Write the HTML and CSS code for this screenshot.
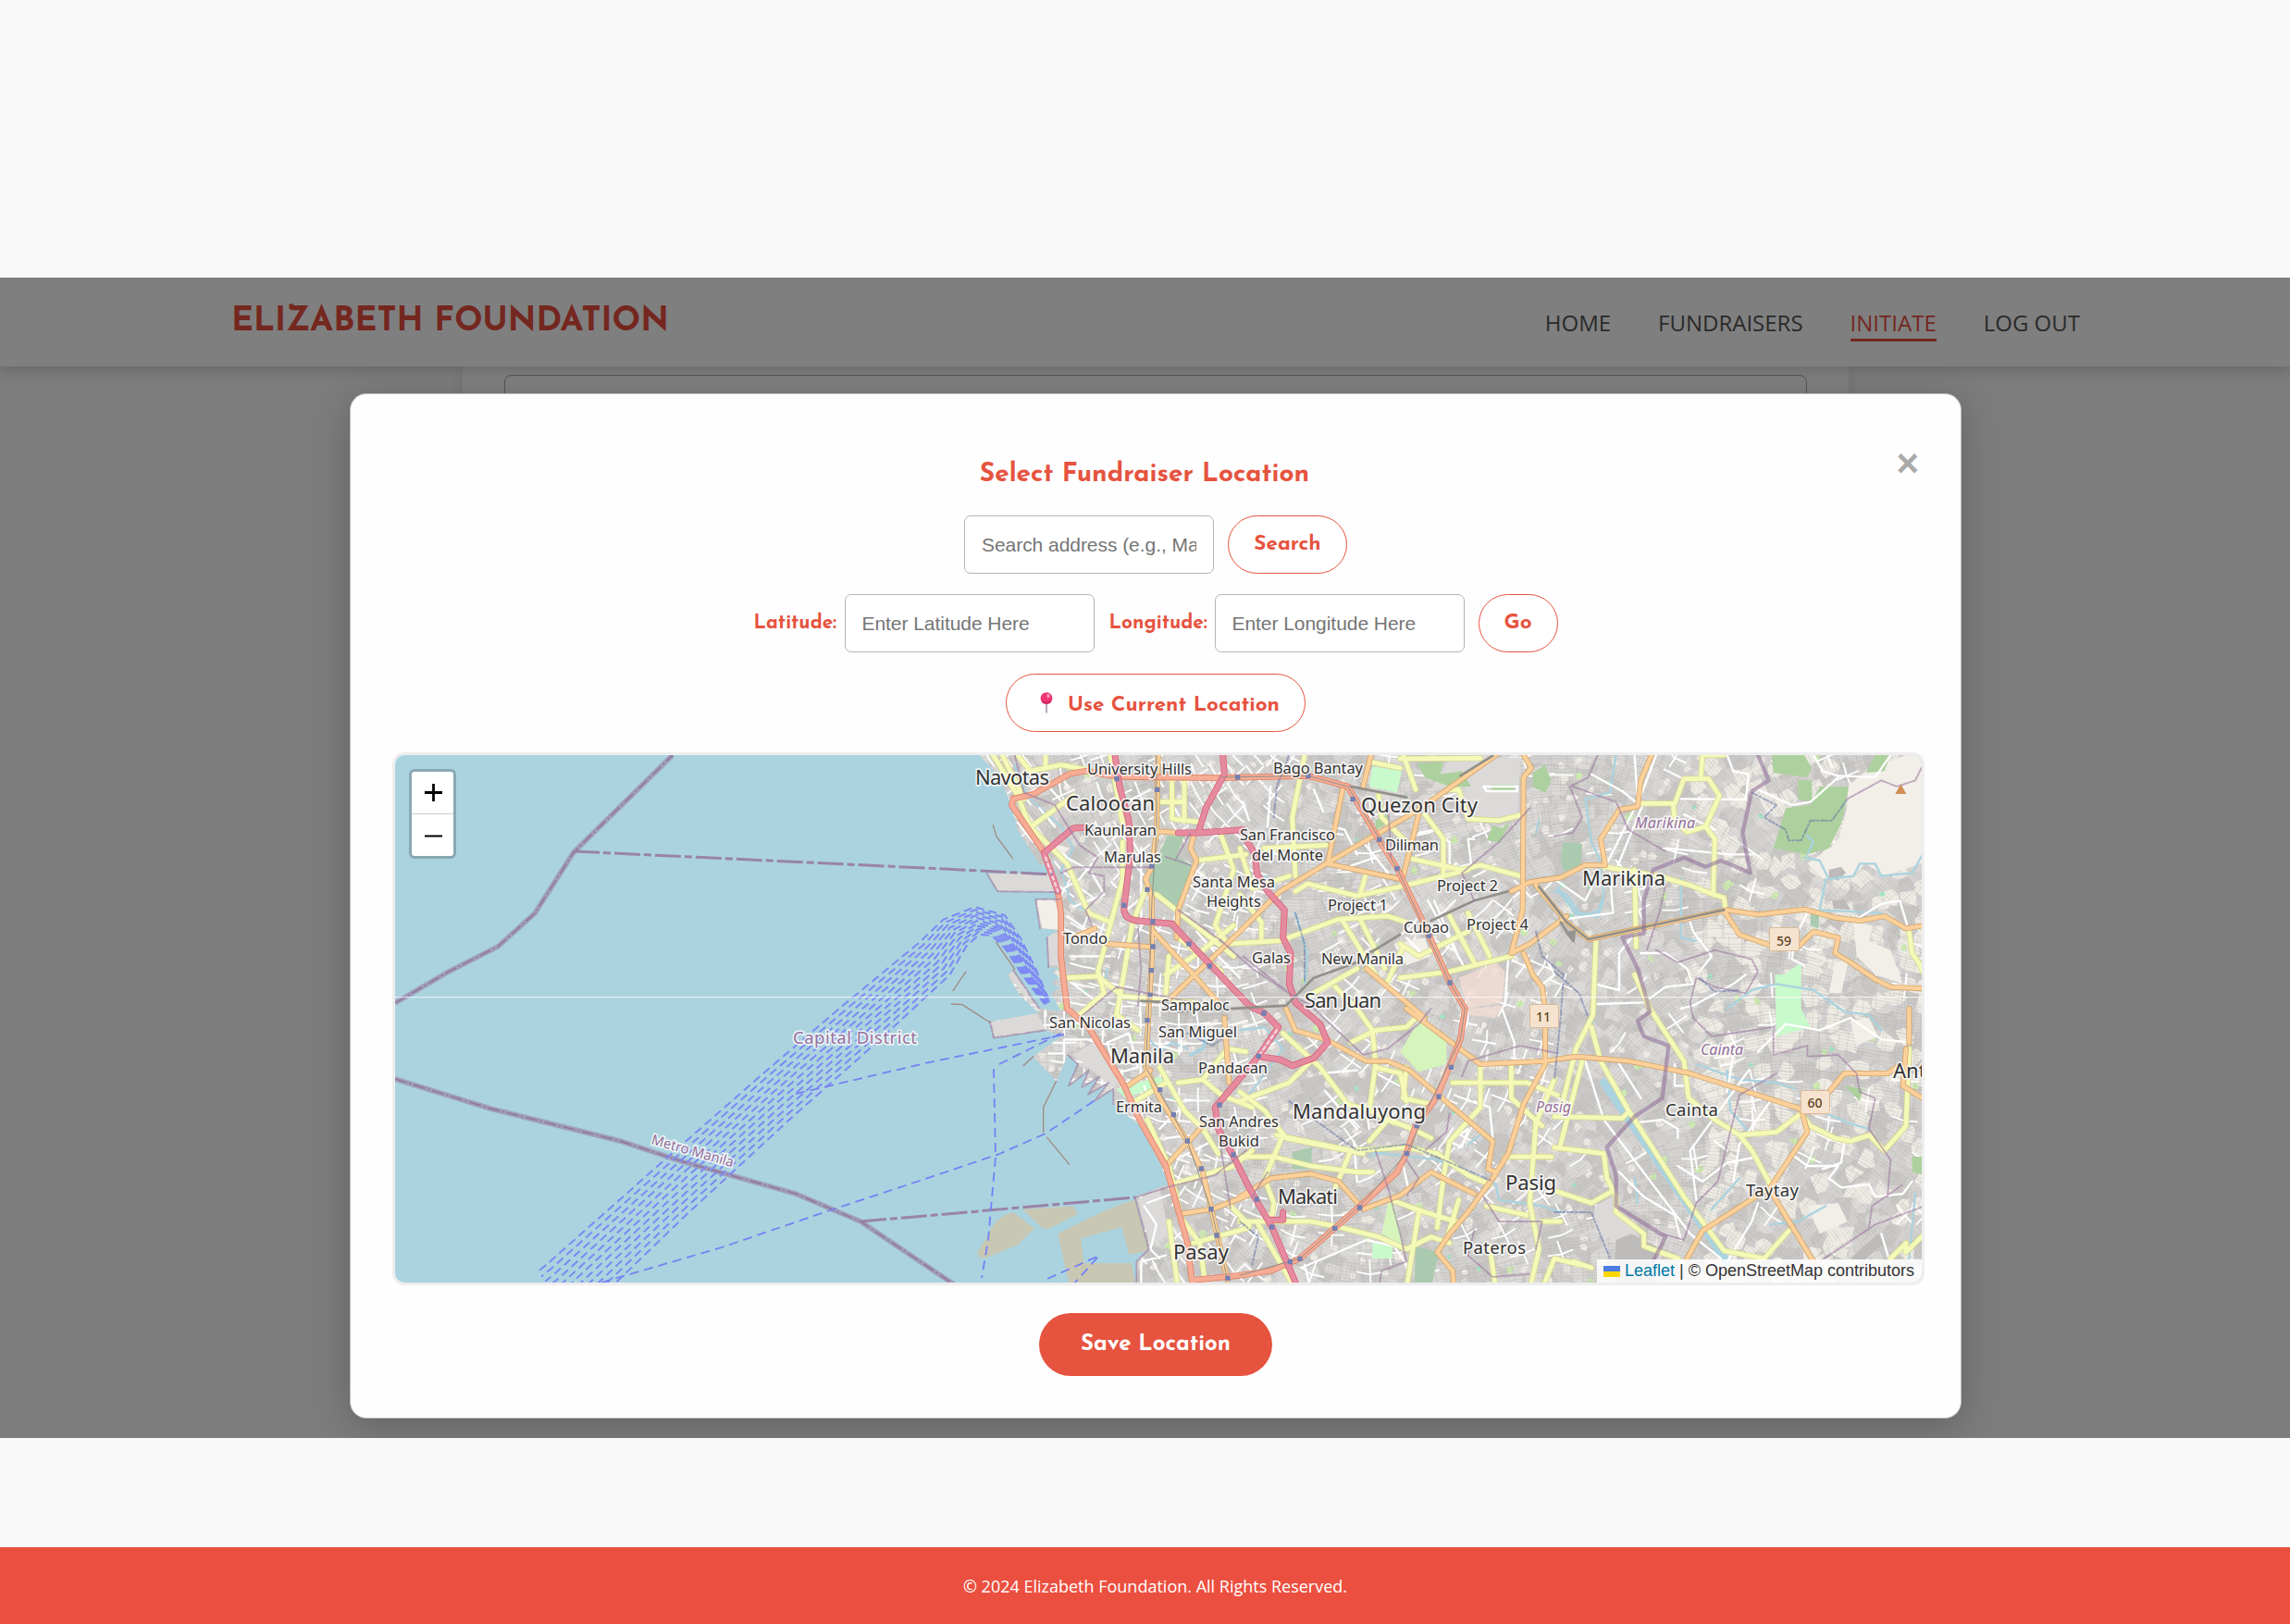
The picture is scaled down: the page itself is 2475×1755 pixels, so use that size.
FILE: index.html
```html
<!DOCTYPE html>
<html lang="en">
<head>
<meta charset="utf-8">
<title>Elizabeth Foundation</title>
<link rel="stylesheet" href="styles.css">
</head>
<body>
<main class="stage">
  <header class="site-header">
    <div class="brand">ELIZABETH FOUNDATION</div>
    <nav class="nav">
      <a class="nav-link home">HOME</a>
      <a class="nav-link fundraisers">FUNDRAISERS</a>
      <a class="nav-link initiate active">INITIATE</a>
      <a class="nav-link logout">LOG OUT</a>
    </nav>
  </header>
  <section class="form-card"><div class="form-field"></div></section>
  <div class="overlay">
    <div class="modal">
      <span class="close">×</span>
      <h2 class="modal-title">Select Fundraiser Location</h2>
      <div class="row">
        <input class="field" placeholder="Search address (e.g., Manila)">
        <button class="pill search"><span>Search</span></button>
      </div>
      <div class="row coords">
        <label class="label lat">Latitude:</label>
        <input class="field" placeholder="Enter Latitude Here">
        <label class="label lng">Longitude:</label>
        <input class="field" placeholder="Enter Longitude Here">
        <button class="pill go"><span>Go</span></button>
      </div>
      <div class="row">
        <button class="pill current">
          <svg class="pin" viewBox="0 0 14 23" width="14" height="23"><path d="M6.2 12h1.7v10.5H6.2z" fill="#a99aae"/><circle cx="7" cy="6.6" r="6.4" fill="#ee3674"/><path d="M1 8a6.4 6.4 0 0 0 12 0 8 8 0 0 1-12 0" fill="#c92260"/><ellipse cx="9" cy="4" rx="1.7" ry="2.1" fill="#ff9dbd"/></svg>
          <span>Use Current Location</span>
        </button>
      </div>
      <div class="map">
        <svg class="map-canvas" viewBox="427 816 1650 570" width="1650" height="570">
          <defs>
            <clipPath id="land-clip"><path id="land" d="M175 48 215 90 260 160 275 200 300 290 370 400 440 430 200 432 235 490 430 492 436 515 358 515 372 610 430 615 395 640 400 735 435 740 412 750 435 770 410 785 435 800 410 820 440 880 370 870 285 745 268 762 310 830 370 885 210 912 222 965 390 940 440 960 350 1025 425 1105 462 1020 495 1050 465 1120 530 1070 508 1125 565 1090 528 1148 595 1110 550 1168 610 1130 610 1180 660 1220 700 1250 760 1370 790 1440 680 1480 725 1650 685 1690 685 1790H3240V48Z"/></clipPath>
            <g id="yellow">
              <path d="M220 48 300 180 340 280 460 400 530 560 600 590M300 48 340 100 440 80 520 95M250 48 320 190M390 48V85M350 275 480 180M640 330V450L600 600 560 750 580 820 500 890M600 48 640 270M720 470 670 600 640 780 620 890 690 940M460 770 560 765 640 830 870 850M800 130V250M840 130V250M760 200H840M800 255 890 265M750 500 1000 700M960 310 1000 420 940 600 980 660 1150 650 1340 580 1500 570 1560 590M880 390 1040 370M780 760 900 680 1000 600M780 820 790 700M820 640 960 750"/>
              <path d="M1230 48 1190 250 1200 440M1440 70 1540 90M1550 48 1590 160M1540 60 1800 58M1620 240 1680 320V430M1470 180 1480 250 1560 330M1580 385 1740 420 1800 405 1930 440M1690 160 1730 160 1760 255 1860 260 1940 240M1100 350 1300 340M1200 490 1240 465 1400 505 1560 470 1760 420M1350 580 1460 760M1410 580 1490 740M1430 430 1410 500M1540 660 1600 700 1760 620M1700 570 1780 720M1760 560 1830 700M1540 770 1700 750 1900 700M1330 800 1400 870 1450 940 1460 1050 1440 1200M1240 830 1400 740M1020 350 1060 480 1180 440M1020 500 1090 590V640M1550 670 1500 780"/>
              <path d="M2320 205 2430 205 2460 125 2540 125 2575 180 2530 280 2470 298 2430 260 2425 205M2515 120 2520 48 2590 48M2530 280 2560 320 2555 500 2480 470 2380 440 2200 410M2555 500 2590 510 2595 550M2300 420 2305 670M2175 640 2165 890 2110 1000 2060 1200M3190 620 3200 690 3220 720 3240 760"/>
              <path d="M2350 870 2460 1040 2475 1160 2560 1230 2640 1280 2760 1270 2840 1210 2870 1250 2950 1290 3000 1300 3060 1280 3110 1330 3180 1250 3190 1000M2160 930 2190 1040 2280 1200 2460 1480 2590 1655 2720 1680 2800 1590M2640 1280 2680 1330 2740 1440M2040 1220 2260 1225 2280 1205M2040 1320 2200 1340 2210 1420 2240 1480 2240 1530 2330 1600 2330 1640 2440 1680M2040 1460 2160 1500 2230 1460M2130 1040 2060 1310M2300 760 2350 870M2100 1690 2160 1710M3130 1680 3180 1630 3180 1660 3240 1600"/>
              <path d="M1160 950 1280 1060 1370 1180 1440 1200 1520 1240M1560 1060 1550 1160 1640 1180M1710 1110 1950 1110 2050 1150M1800 1060V1190L1700 1300 1680 1420 1660 1580M1900 1050V1160L2000 1250M1020 1170 1180 1110 1260 1030M1020 1350 1130 1350 1250 1380 1400 1400 1450 1400M1140 1280 1380 1330 1560 1320 1660 1340 1760 1410 1830 1440M1160 1280 1100 1420 1130 1500 1120 1570M1120 1560 1250 1560 1350 1580 1470 1610 1560 1650 1640 1610 1700 1630M1510 1490 1620 1530 1720 1560M1600 1530 1560 1780M1730 1490 1690 1620M1380 1330 1330 1450M1440 1300 1500 1230 1580 1260 1640 1290M1380 980 1460 940 1560 930 1590 900M1460 1060 1540 1080 1560 1170M1020 1140 1100 1200 1170 1290 1420 1340"/>
              <path d="M720 1230 790 1380 830 1550 890 1630 910 1780M790 1560 820 1780M800 1440 1000 1380 1060 1330M870 1630 1050 1580M820 1110 900 1100 980 1000 1040 1010M760 1060 840 1200 900 1260 950 1340M900 1100 960 1150 1060 1190M680 1170 780 1110M980 1500 1050 1570M1960 1780 1990 1650 1960 1500 1980 1240 2040 1100M1830 1640 1850 1780M2000 1780 2040 1680 2120 1700M1880 1350H2030M1080 1570 1200 1780M1820 1510 1950 1540M2000 1560H2060M1020 1560 1130 1560"/>
            </g>
            <g id="orange">
              <path d="M755 48 750 300 735 410 715 450 735 510V700L725 870 715 1060 760 1160 850 1300 900 1400 930 1530 980 1750M755 295 820 300M870 310 860 350 880 390 820 550 815 640M740 620 870 760 950 850M780 850 1020 620 1150 490 1300 400 1600 225 1850 48M1445 48 1420 150M1355 150 1305 400 1540 450M1550 440 1600 240M1940 48 1965 90 1940 120 1937 550 1900 690M1900 490 1960 460 2060 445 2140 405 2205 405 2190 320 2250 225 2310 215 2320 130 2355 48M1980 470 2080 590 2150 645 2600 550 2700 565 2850 548 2950 575 3030 585 3110 570 3180 610 3240 600"/>
              <path d="M2595 560 2640 630 2740 665 2830 670 2880 620 2960 640 2950 690 3000 720 3080 775 3130 800 3240 805M1900 690 1960 660 2080 570M1940 690 1970 760 2000 800 2010 870V1050L1940 1180 1890 1340 1840 1420 1760 1530 1700 1600 1660 1660 1710 1720 1715 1780M1560 870 1800 1050 2010 1040 2110 1025 2280 1040 2480 1080 2840 1195 2860 1270 2740 1450 2520 1590 2470 1680M2740 1460 2880 1690M1430 740 1500 800 1620 900M1020 1480 1120 1420 1250 1405 1340 1430 1420 1520 1540 1475 1640 1400 1780 1470M1170 870 1200 940 1300 970 1430 1040 1500 1040 1570 1070 1840 1300 1825 1390 1850 1400M2930 1140 2980 1080 3120 1080 3150 1060M3190 980V870M3180 1000 3170 1120 3240 1165M780 1380 900 1250M830 1535 930 1520 1060 1470M490 635 550 610M590 660 735 670M650 1125 730 1070M970 900 985 1110"/>
            </g>
            <g id="salmon"><path d="M520 100 470 108 350 175 285 190 280 210 380 355M430 490 440 560V700L460 870 530 930 560 980 640 1110 700 1240 780 1380 800 1450 850 1630 868 1780M520 100 620 118 960 122 1240 115 1370 150 1470 320 1530 415 1600 560 1633 632 1700 785 1750 870 1735 970 1660 1155 1590 1250 1560 1340 1530 1400 1410 1510 1215 1680 1120 1720 1020 1735 870 1750"/></g>
            <g id="pink"><path d="M615 48 630 150 660 260 665 370 645 540Q640 580 690 585L800 595 860 660 1050 860 1100 885 1145 930 1080 1025 1150 1035 1190 1055 1260 1030 1305 980 1280 920 1200 850 1180 790 1185 690 1160 640 1165 550 1110 490 1075 430 1070 370 1045 330M430 490 385 365 480 285 520 283M965 48 970 110 910 220 885 300 1030 290M820 300 885 300M1080 1025 940 1190 950 1260 1000 1350 1050 1450 1125 1580 1210 1780M1120 1555 1160 1555V1530"/></g>
            <g id="stations" fill="#7480b1"><path d="M613 117h16v16h-16zM744 152h16v16h-16zM1005 112h16v16h-16zM726 400h16v16h-16zM712 476h16v16h-16zM636 527h16v16h-16zM730 580h16v16h-16zM847 652h16v16h-16zM914 724h16v16h-16zM730 661h16v16h-16zM725 738h16v16h-16zM721 818h16v16h-16zM712 900h16v16h-16zM753 1125h16v16h-16zM797 1206h16v16h-16zM842 1291h16v16h-16zM887 1381h16v16h-16zM919 1512h16v16h-16zM937 1597h16v16h-16zM973 1736h16v16h-16zM946 1174h16v16h-16zM991 1336h16v16h-16zM1234 107h16v16h-16zM1378 183h16v16h-16zM1464 314h16v16h-16zM1522 408h16v16h-16zM1625 625h16v16h-16zM1693 778h16v16h-16zM1090 877h16v16h-16zM1073 1016h16v16h-16zM1697 1052h16v16h-16zM1657 1147h16v16h-16zM1585 1242h16v16h-16zM1553 1332h16v16h-16zM1401 1507h16v16h-16zM1320 1574h16v16h-16zM1207 1673h16v16h-16zM1175 1683h16v16h-16zM1116 1570h16v16h-16zM1067 1480h16v16h-16z"/></g>
          </defs>
          <rect x="427" y="816" width="1650" height="570" fill="#aad3df"/>
          <g transform="translate(1000 800) scale(.33333)" fill="none" stroke-linejoin="round" stroke-linecap="round">
            <g fill="#c7c7b4"><path d="M315 1520 480 1510 495 1535 405 1582 380 1582ZM285 1530Q230 1540 200 1610L170 1660Q170 1685 200 1677L300 1635 355 1582ZM430 1600Q600 1510 680 1490L725 1655 660 1668 638 1578 505 1615 515 1695 670 1695 685 1780H470Z"/></g>
            <use href="#land" fill="#d4d2d0"/>
            <g clip-path="url(#land-clip)">
              <g id="blocks"></g>
              <g id="streets"></g>
              <path fill="#f2efe9" d="M280 240 330 230 400 330 470 350 430 380 370 320ZM360 520 410 515 436 540 430 615 380 610ZM2860 400 2960 330 2990 210 2990 150 3050 100 3180 48H3240V395L3110 440 3050 400 2990 450 2910 450ZM2995 710 2970 820 2930 820 2950 720ZM1520 660 1620 640 1640 700 1560 730ZM2860 1510 2960 1500 2990 1560 2900 1600ZM3000 910 3060 900 3090 960 3020 990ZM3010 590 3070 600 3060 650 3130 680 3170 790 3080 760 3020 700Z"/>
              <path fill="#dcdad9" d="M205 434 400 430 430 490 235 488ZM395 625H430V730H400ZM270 760 290 750 360 870 330 840ZM215 915 360 880 390 935 225 960ZM480 1020 560 970 640 1110 600 1120ZM690 1490 760 1450 790 1600 730 1640ZM1700 60 1930 55 1920 250 1780 250 1750 150 1640 160ZM2170 1510 2230 1480 2320 1620 2250 1620 2170 1600Z"/>
              <path fill="#aacbaf" d="M785 310 840 310 815 375 865 405 820 545 790 535 720 470 740 410ZM2070 330 2130 335 2125 410 2070 425 2060 385ZM1190 1335 1255 1320 1250 1390 1190 1390ZM1590 1640 1665 1660 1640 1780H1585ZM2870 560 2900 560 2895 610 2870 600Z"/>
              <path fill="#add19e" d="M2745 48H2850L2875 90 2860 120 2750 105ZM2830 130 2875 130 2875 200 2830 190ZM2900 150 2995 150 2970 270 2950 310 2930 350 2860 370 2750 350 2790 220 2870 210ZM3050 105 3080 48H3130L3110 100ZM1595 75 1680 70 1670 110 1740 100 1770 150 1700 150 1620 120ZM1840 275 1870 285 1895 265 1865 330 1820 325ZM1970 105 2010 80 2030 130 2010 170 1970 150ZM2980 1120 3040 1130 3030 1170ZM3200 1350 3240 1350V1410L3200 1400ZM1460 260 1500 240 1500 270 1460 290ZM1835 145H1910V162H1835Z"/>
              <path fill="#c8facc" d="M2840 720V870L2870 930 2760 960 2755 760 2785 760ZM1450 85 1545 100 1530 170 1440 150ZM620 1130 760 1090 780 1110 650 1160ZM1450 1630H1515V1680H1450Z"/>
              <path fill="#d6f5bd" d="M1600 910 1690 970 1690 1050 1600 1075 1540 1010ZM1500 1500 1520 1500 1550 1640 1480 1600Z"/>
              <path fill="#f3dcd2" fill-opacity=".8" d="M1730 770 1850 720 1880 750 1870 850 1760 870ZM1760 870 1870 860 1850 900 1760 890Z"/>
              <path fill="#bcbbb9" d="M2930 420 2970 410 2985 430 2960 455 2930 445ZM2940 520 2980 515 3000 550 2945 545ZM2240 1620 2290 1600 2370 1640 2360 1780H2230ZM3000 1680 3090 1600 3110 1630 3040 1690Z"/>
              <g stroke="#aad3df" stroke-width="7">
                <path d="M290 80 330 180 440 280 480 350 440 420 470 520 530 560M590 740 580 800M2240 48 2220 170 2140 190 2160 330 2185 380 2200 500 2190 550 2130 570 2080 500 2040 490M1980 300 1990 260M2860 370 2880 330 2860 310M2850 380 2900 390 2930 450 3010 440 3030 400 3080 400 3100 440 3200 430 3240 360M2920 450 2900 550 3100 560 3160 610M2450 450V640L2500 650M2600 870 2680 810 2760 790 2880 810 2980 880 3060 890 3100 940M1440 1350 1500 1330 1580 1320M1350 1330 1400 1330 1660 1360 1790 1420 1850 1440 1860 1490 2000 1510 2060 1530M1100 440 1140 480M1200 560 1240 700 1230 800M1020 940 1100 930 1160 1000 1050 1150M2500 1050 2640 1100 2760 1110 2820 1130M2600 1070 2610 1200 2680 1280M2900 1200 2990 1240 3060 1260M2300 1420 2310 1500M2550 1520 2640 1420M2740 1570 2830 1560 2920 1510M3210 1470 3190 1680M720 960 760 1010 800 980 850 1000M1760 1310 1800 1280"/>
                <path stroke-width="27" d="M2200 1110 2600 1690"/>
                <path stroke-width="12" d="M2050 480 2110 560 2180 570 2195 520M860 1020 900 1000 920 940"/>
              </g>
              <g stroke="#fff" stroke-width="7">
                <path d="M400 150 470 230M370 220 420 280M440 370 530 420 540 400 500 450 450 480M460 570 560 640M540 430 580 500 480 540M480 700H600M700 350 700 600M690 520 640 560M880 620 950 700 1020 770M820 700 960 850M480 790 560 850M1030 200 1050 260M1120 150 1110 280M1260 160 1290 230M1320 280 1360 290 1400 370M1300 400 1420 330 1500 430M1340 420 1460 380M1600 300 1650 290 1700 330V400M1810 150H1920V165H1820ZM1780 320H1760L1770 400 1700 420M1630 520 1750 740M1650 520 1720 680M1560 640 1620 700M1890 710 1880 860M1990 800 2040 760 2020 720M2040 450 2140 520 2160 480M2160 110 2260 165 2310 205M2300 48 2310 200 2200 420M2330 200 2240 420M2370 48 2320 180M2450 190 2660 192 2670 110 2620 100 2600 48M2460 240 2560 290M2400 350 2610 370 2690 370M2240 390 2310 470M2220 430 2230 560 2070 580 2040 590M2480 590 2490 620 2550 700 2510 750M2880 48 2910 100 2960 115 3080 120 3130 48M2960 120 2870 200 2810 210 2700 160M3020 580 3100 530 3160 520 3190 620M2320 690 2400 690 2470 740 2490 790M2860 560 2820 640 2810 710 2850 730M2170 790 2250 810 2250 690 2290 640M2180 855 2330 850 2400 800 2490 790M2450 870 2490 860 2620 790 2660 760"/>
                <path d="M400 1015H450V970H560M590 980 660 950 690 1060 620 1080ZM710 1120 730 1180M760 1260 820 1200M780 1290 870 1280M830 1350 930 1300M720 1500 800 1470M710 1510 750 1570 730 1650 760 1680M700 1780V1690L780 1670M830 970V1010L760 990M1280 1080 1400 1070M1300 1140 1400 1260M1390 1300 1400 1430M1430 1200 1440 1260M1220 1710 1430 1620 1520 1640 1560 1700M1250 1780 1230 1700M1550 1380 1570 1470M1700 1300 1760 1260 1740 1320ZM1870 870 1910 980 1910 1040M1780 1170 1830 1190 1840 1290M2140 1040 2200 1230 2480 1600 2580 1680M2250 1050 2320 1160M2430 1050 2430 1120 2460 1120M2560 1030 2620 1020 2600 1140M2670 1070 2480 1330 2500 1490M2740 1170 2640 1310 2620 1430M2560 1300 2600 1330M2300 1240 2390 1230 2440 1260 2440 1290M2700 1010 2790 920 2900 940 3000 900 3100 970 3200 980M2440 1380 2520 1430 2600 1370 2700 1350M2820 1350 2860 1380 2960 1380 2930 1420 2970 1450 3060 1440 3080 1480 3170 1470 3200 1430M2250 1400 2330 1480 2430 1540 2450 1620M2700 1500 2680 1560 2600 1690M3100 1600 3130 1700M2980 1300 2970 1370 2910 1390"/>
              </g>
            </g>
            <g stroke="#a28b83" stroke-width="4"><path d="M220 275 230 310 283 382M132 750 90 812M85 855 120 857 210 915M230 655 290 742M350 1025 318 1055M425 1105 383 1190V1270M395 1288 467 1375"/></g>
            <use href="#yellow" stroke="#d6da92" stroke-width="19"/>
            <use href="#yellow" stroke="#f5f9b8" stroke-width="14"/>
            <use href="#orange" stroke="#d3a66c" stroke-width="18"/>
            <use href="#orange" stroke="#fbd09a" stroke-width="13"/>
            <use href="#salmon" stroke="#df8468" stroke-width="20"/>
            <use href="#salmon" stroke="#f6ac95" stroke-width="15"/>
            <use href="#pink" stroke="#d7627c" stroke-width="21"/>
            <use href="#pink" stroke="#e68b9f" stroke-width="16"/>
            <g stroke="#929089" stroke-width="8"><path d="M700 845 800 850M820 880 1170 860 1260 770 1400 720M1440 690 1540 630M1640 585 1780 520 1890 490M1380 150 1560 185M1735 115 1840 50M1990 475 2080 590 2150 645 2590 550M2060 590 2100 650"/><path stroke-width="3" d="M750 48V300L735 520 725 850 715 1060 850 1300 930 1530 980 1750M960 120 1240 115 1370 150 1530 415 1700 785 1750 870 1735 970 1560 1340 1410 1510 1215 1680 1020 1735"/></g>
            <path fill="#969491" d="M2060 590 2080 620 2110 615 2105 658 2080 630Z"/>
            <g stroke="#9d7aa0" stroke-opacity=".6" stroke-width="6" stroke-dasharray="22 6 5 6">
              <path d="M440 430 480 412H730M780 378 860 405M810 390 860 300M290 48 320 170 420 210 500 340 560 380 530 430 580 440 580 490 520 550 540 600M690 610 700 740 690 860M500 900 620 800 870 850M820 550 960 650 1060 740 1180 820M1500 200 1510 380M1960 220 1860 330 1740 430 1780 520M1030 700 1180 820 1250 860 1420 1020 1500 1000 1600 920 1640 870M2180 48 2150 120 2090 150 2130 250 2100 300 2040 310M2100 150 2240 200 2280 290 2400 360M2400 470 2380 560 2340 680M2370 680 2440 720 2560 680 2680 710 2700 750 2660 820 2560 800 2500 770 2480 850 2490 900 2550 960 2750 930V1020L2860 990V1025L2960 1020 3020 1080 3030 1140 3080 1160 3060 1260 3130 1360 3120 1480M3240 1510 3080 1570 2900 1690M2990 190 3100 130 3150 150 3210 130 3230 90M3060 1580 3070 1510 3170 1440M2760 1080 2640 1150 2610 1270 2570 1430 2500 1500 2460 1620 2390 1600M1110 1400 1060 1480M1740 1090 1760 1040 1930 990 2050 1015M1700 1210 1690 1270 1620 1330M1560 1360 1600 1420 1560 1480M1460 1330 1500 1450 1540 1600 1560 1690 1480 1720 1470 1780M1810 1480 1860 1560 2000 1560 1980 1650M1780 1590 1760 1670 1840 1740 1960 1730M960 1330 990 1520M680 1482 800 1445 940 1410 1040 1330M200 432 235 490 430 492M436 515H358L372 610M395 640 400 735M285 745 370 870M210 912 222 965 390 940M462 1020 495 1050 465 1120 530 1070 508 1125 565 1090 528 1148 595 1110 550 1168 610 1130 610 1180M680 1482 725 1650 685 1690V1780"/>
            </g>
            <g stroke="#8e6b98" stroke-opacity=".55" stroke-width="13"><path d="M2700 48 2735 130 2680 165 2650 300 2675 430 2580 390 2530 410 2460 380 2360 420 2330 520 2330 625 2260 640 2310 740 2350 880 2310 910 2330 960 2410 990 2390 1160 2300 1220 2210 1320 2240 1410 2240 1510 2400 1610 2360 1690"/></g>
            <g stroke="#5b6fa6" stroke-opacity=".5" stroke-width="6" stroke-dasharray="20 8 5 8"><path d="M2680 170 2760 210 2720 250 2790 290 2800 325 2840 325 2870 260 2940 260 2990 190M1180 48 1140 150 1130 250M1200 560 1230 660 1230 780M1980 620 2000 700 2070 760 2060 900 2040 1100M2040 750 2120 820 2150 900M2510 770 2560 815 2640 810M1180 1170 1220 1200 1400 1330 1560 1310 1680 1360 1840 1430M1020 1560 1080 1610 1060 1700M2040 1530 2160 1530 2220 1680M850 950 930 990 960 970"/></g>
            <g stroke="#fff" stroke-opacity=".65" stroke-width="7" stroke-dasharray="10 12"><path d="M390 380 430 490M1140 940 1080 1025"/></g>
            <use href="#stations"/>
            <path fill="#d08f55" d="M3145 174 3163 142 3181 174Z"/>
          </g>
          <g fill="none" stroke="#987ba3" stroke-opacity=".6" stroke-width="5.500"><path d="M427 1084 485 1050 538 1023 578 987 620 921 727 816M427 1166 530 1198 670 1233 740 1256 860 1290 930 1320 1034 1390"/></g>
          <g fill="none" stroke="#8b6690" stroke-opacity=".8" stroke-width="1.4" stroke-dasharray="13 3 2 3"><path d="M427 1084 485 1050 538 1023 578 987 620 921 727 816M427 1166 530 1198 670 1233 740 1256 860 1290 930 1320 1034 1390"/></g>
          <g fill="none" stroke="#9a83a8" stroke-width="3" stroke-dasharray="28 4 8 4"><path d="M620 920 1000 938 1138 945M930 1320 1000 1314 1227 1294"/></g>
          <g id="ferries" fill="none" stroke="#7d89f4" stroke-width="2"></g>
          <g fill="none" stroke="#7680f4" stroke-width="1.8" stroke-dasharray="10 6"><path d="M860 1182 1000 1149 1150 1118M1074 1155 1076 1250 1068 1340 1061 1381M650 1386 780 1348 900 1307 1000 1274 1080 1247 1130 1225 1185 1188M1080 1150 1150 1115M1132 1382 1188 1357 1160 1388"/></g>
          <path fill="#fff" fill-opacity=".65" d="M427 1077h1650v1.2H427z"/>
          <g class="shields"><rect x="1912.500" y="1002.500" width="32" height="25" rx="2"/><rect x="1653.500" y="1085.500" width="31" height="25" rx="2"/><rect x="1946.500" y="1178.500" width="31" height="25" rx="2"/><text x="1928" y="1021.500">59</text><text x="1668" y="1103.500">11</text><text x="1961.500" y="1196.500">60</text></g>
          <g class="places">
            <g class="city">
              <text x="1054" y="848" textLength="80">Navotas</text><text x="1152" y="876" textLength="96">Caloocan</text><text x="1471" y="878" textLength="126">Quezon City</text><text x="1410" y="1089" textLength="83">San Juan</text><text x="1710" y="957" textLength="90">Marikina</text><text x="1200" y="1149" textLength="69">Manila</text><text x="1397" y="1209" textLength="144">Mandaluyong</text><text x="1381" y="1301" textLength="65">Makati</text><text x="1627" y="1286" textLength="55">Pasig</text><text x="1268" y="1361" textLength="60">Pasay</text><text x="2046" y="1165">Antipolo</text>
            </g>
            <g class="town"><text x="1581" y="1355" textLength="68">Pateros</text><text x="1800" y="1206" textLength="57">Cainta</text><text x="1887" y="1293" textLength="57">Taytay</text></g>
            <g class="suburb">
              <text x="1175" y="836.500" textLength="113">University Hills</text><text x="1172" y="903" textLength="78">Kaunlaran</text><text x="1193" y="932" textLength="62">Marulas</text><text x="1289" y="959" textLength="89">Santa Mesa</text><text x="1304" y="980" textLength="59">Heights</text><text x="1149" y="1020" textLength="48">Tondo</text><text x="1255" y="1092" textLength="74">Sampaloc</text><text x="1376" y="836" textLength="97">Bago Bantay</text><text x="1340" y="908" textLength="103">San Francisco</text><text x="1353" y="929.500" textLength="77">del Monte</text><text x="1497" y="919" textLength="58">Diliman</text><text x="1553" y="963" textLength="66">Project 2</text><text x="1435" y="984" textLength="65">Project 1</text><text x="1517" y="1008" textLength="49">Cubao</text><text x="1585" y="1005" textLength="67">Project 4</text><text x="1353" y="1041" textLength="42">Galas</text><text x="1428" y="1042" textLength="89">New Manila</text><text x="1134" y="1111" textLength="88">San Nicolas</text><text x="1252" y="1121" textLength="85">San Miguel</text><text x="1295" y="1160" textLength="75">Pandacan</text><text x="1206" y="1202" textLength="50">Ermita</text><text x="1296" y="1218" textLength="86">San Andres</text><text x="1317" y="1239" textLength="44">Bukid</text>
            </g>
            <g class="district"><text class="big" x="857" y="1127.500" textLength="134">Capital District</text><text transform="translate(703 1236) rotate(16)" textLength="92">Metro Manila</text><text class="it" x="1767" y="895" textLength="65">Marikina</text><text class="it" x="1660" y="1202" textLength="38">Pasig</text><text class="it" x="1838" y="1140" textLength="46">Cainta</text></g>
          </g>
        </svg>
        <div class="zoom">
          <span class="zoom-btn"><svg width="19" height="19" viewBox="0 0 19 19"><path d="M0 9.500H19M9.500 0V19" stroke="#000" stroke-width="2.800"/></svg></span>
          <span class="zoom-btn"><svg width="19" height="19" viewBox="0 0 19 19"><path d="M0 9.500H19" stroke="#000" stroke-width="2.200"/></svg></span>
        </div>
        <div class="attribution"><svg width="18" height="12" viewBox="0 0 18 12"><path fill="#4c7be1" d="M0 0h18v6H0z"/><path fill="#ffd500" d="M0 6h18v6H0z"/></svg><span><a>Leaflet</a> | © OpenStreetMap contributors</span></div>
      </div>
      <button class="save"><span>Save Location</span></button>
    </div>
  </div>
</main>
<footer class="footer">© 2024 Elizabeth Foundation. All Rights Reserved.</footer>
<script src="map.js"></script>
</body>
</html>
```
FILE: styles.css
```css
* { box-sizing: border-box; }
body { margin: 0; width: 2475px; height: 1755px; padding-top: 300px; background: #f9f9f9; font-family: "Open Sans", sans-serif; display: flex; flex-direction: column; overflow: hidden; }
.stage { position: relative; height: 1254px; overflow: hidden; flex: none; }
.site-header { position: relative; z-index: 1; height: 96px; padding: 0 227px 0 250px; display: flex; justify-content: space-between; background: #fff; box-shadow: 0 3px 15px rgba(0,0,0,.2); }
.brand { font: 700 36px/60px "Josefin Sans", Lato, sans-serif; letter-spacing: 0; margin-top: 18px; color: #e94e3f; white-space: nowrap; }
.nav { display: flex; gap: 51px; padding-top: 30px; }
.nav-link { height: 39px; font-size: 24px; line-height: 37px; color: #555; white-space: nowrap; }
.active { color: #e94e3f; border-bottom: 3px solid #e94e3f; }
.form-card { width: 1498px; height: 1100px; margin-left: 500px; padding: 9px 45px; background: #fff; box-shadow: 0 0 15px rgba(0,0,0,.1); }
.form-field { height: 80px; border: 1px solid #aaa; border-radius: 8px; }
.overlay { position: absolute; inset: 0; z-index: 2; padding: 125px 0 0 378px; background: rgba(0,0,0,.5); }
.modal { position: relative; width: 1742px; height: 1108px; padding: 63px 0 0; border: 1px solid #bbb; border-radius: 18px; background: #fefefe; box-shadow: 0 8px 38px rgba(0,0,0,.2); display: flex; flex-direction: column; align-items: center; }
.close { position: absolute; right: 45px; top: 51px; font: 700 42px/48px "Liberation Sans", sans-serif; color: #aaa; }
.modal-title { margin: 0 24px 20px 0; height: 48px; font: 700 28px/48px "Josefin Sans", Lato, sans-serif; color: #e6533f; white-space: nowrap; }
.row { display: flex; justify-content: center; align-items: center; gap: 15px; height: 63px; margin-bottom: 22px; }
.coords { gap: 0; margin-bottom: 23px; }
.field { width: 270px; height: 63px; border: 1px solid #b4b4b4; border-radius: 7px; padding: 1px 18px 0; font: 21px "Liberation Sans", sans-serif; letter-spacing: -.05px; background: #fff; }
.field::placeholder { color: #757575; opacity: 1; }
.label { font: 700 21px/60px "Josefin Sans", Lato, sans-serif; color: #e6533f; white-space: nowrap; }
.lat { width: 98px; }
.lng { width: 114px; margin-left: 16px; }
.pill { height: 63px; padding: 0; border: 1px solid #e6533f; border-radius: 32px; background: #fff; color: #e6533f; font: 700 22.500px "Josefin Sans", Lato, sans-serif; white-space: nowrap; }
.search { width: 129px; }
.go { width: 86px; margin-left: 15px; }
.current { width: 324px; display: flex; align-items: center; justify-content: center; gap: 16px; padding-left: 9px; }
.current span { padding-top: 5px; }
.map { position: relative; width: 1656px; height: 576px; margin-left: 6px; border: 3px solid #eee; border-radius: 13px; overflow: hidden; flex: none; }
.map-canvas { display: block; }
.places text { fill: #333; stroke: #fff; stroke-opacity: .75; stroke-width: 3.500px; paint-order: stroke; stroke-linejoin: round; font-family: "Noto Sans", sans-serif; }
.city text { font-size: 22px; }
.town text { font-size: 18.500px; }
.suburb text { font-size: 16.500px; }
.places .district text { fill: #96719a; font-size: 15px; }
.places .district .big { font-size: 18.500px; }
.places .district .it { font-style: italic; font-size: 16px; }
.shields rect { fill: #f6e3cf; stroke: #dcb895; }
.shields text { font: 500 14px "Noto Sans", sans-serif; fill: #5d431e; text-anchor: middle; }
.zoom { position: absolute; left: 15px; top: 15px; width: 51px; height: 97px; border: 3px solid rgba(0,0,0,.2); background: #fff; background-clip: padding-box; border-radius: 6px; }
.zoom-btn { display: flex; height: 46px; align-items: center; justify-content: center; padding-left: 2px; }
.zoom-btn:first-child { border-bottom: 1px solid #ccc; }
.attribution { position: absolute; right: 0; bottom: 0; width: 351px; height: 25px; display: flex; align-items: center; gap: 5px; padding-left: 7px; background: rgba(255,255,255,.85); font: 18px/25px "Liberation Sans", sans-serif; color: #333; white-space: nowrap; }
.attribution a { color: #0078a8; }
.save { width: 252px; height: 68px; margin-top: 30px; padding: 0; border: 0; border-radius: 34px; background: #e6533f; color: #fff; font: 900 24px "Josefin Sans", Lato, sans-serif; flex: none; }
.footer { height: 83px; margin-top: 118px; padding: 1px 0 0 22px; background: #eb4f40; color: #fff; font-size: 18px; line-height: 83px; text-align: center; flex: none; }
```
FILE: map.js
```js
// Fills the land area with small street grids, and draws the ferry lanes.
(function () {
  var seed = 41;
  function rnd() { seed = (seed * 16807) % 2147483647; return seed / 2147483647; }
  function add(parent, d, attrs) {
    var p = document.createElementNS("http://www.w3.org/2000/svg", "path");
    p.setAttribute("d", d);
    for (var k in attrs) p.setAttribute(k, attrs[k]);
    parent.appendChild(p);
  }
  var blocks = document.getElementById("blocks");
  var streets = document.getElementById("streets");
  var fills = { "#cac8c6": "", "#dcdad8": "", "#eeebe4": "", "#cdebb0": "", "#9fe6c3": "" };
  function blob(x, y, r) {
    var d = "M";
    for (var i = 0; i < 7; i++) {
      var a = i * 0.9, q = r * (0.5 + rnd() * 0.7);
      d += Math.round(x + Math.cos(a) * q) + " " + Math.round(y + Math.sin(a) * q) + " ";
    }
    return d + "Z";
  }
  for (var i = 0; i < 2600; i++) {
    var x = 180 + rnd() * 3060, y = 40 + rnd() * 1740, t = rnd();
    var east = x > 2500 ? 0.2 : 0;
    if (t < 0.38) fills["#cac8c6"] += blob(x, y, 38);
    else if (t < 0.72 - east) fills["#dcdad8"] += blob(x, y, 34);
    else if (t < 0.96) fills["#eeebe4"] += blob(x, y, 14 + east * 100);
    else if (t < 0.985) fills["#cdebb0"] += blob(x, y, 14);
    else fills["#9fe6c3"] += blob(x, y, 9);
  }
  for (var c in fills) add(blocks, fills[c], { fill: c });
  var fine = "", white = "";
  for (var gx = 200; gx < 3240; gx += 62) {
    for (var gy = 50; gy < 1780; gy += 62) {
      var ang = Math.sin(gx / 390) * 0.7 + Math.cos(gy / 310) * 0.6 + (rnd() - 0.5) * 0.12;
      var cs = Math.cos(ang), sn = Math.sin(ang);
      var pt = function (u, v) { return Math.round(gx + u * cs - v * sn) + " " + Math.round(gy + u * sn + v * cs); };
      for (var k = -3; k <= 3; k++) {
        if (rnd() < 0.8) fine += "M" + pt(-32, k * 10) + "L" + pt(32, k * 10 + rnd() * 6);
        if (rnd() < 0.3) fine += "M" + pt(k * 11, -32) + "L" + pt(k * 11, 32);
      }
      if (gx < 1100 ? rnd() < 0.6 : gx < 2100 ? rnd() < 0.28 : rnd() < 0.1) {
        white += "M" + pt(-40, 0) + "L" + pt(0, rnd() * 8) + " " + pt(40, 0);
        if (rnd() < 0.6) white += "M" + pt(0, -38) + "L" + pt(5, 38);
      }
    }
  }
  add(streets, fine, { stroke: "#b2b0ae", "stroke-opacity": ".5", "stroke-width": "2" });
  add(streets, white, { stroke: "#fff", "stroke-width": "5.5" });

  var lane = [[602,1400,33],[614,1390,33],[720,1292,30],[840,1184,28],[930,1106,27],[1010,1036,24],[1032,1008,19],[1056,995,15],[1079,1000,13],[1095,1020,10],[1112,1050,8],[1132,1084,3]];
  var ferries = document.getElementById("ferries");
  for (var n = -5; n <= 5; n++) {
    var d = "";
    for (var j = 0; j < lane.length; j++) {
      var a = lane[Math.max(0, j - 1)], b = lane[Math.min(lane.length - 1, j + 1)];
      var dx = b[0] - a[0], dy = b[1] - a[1], len = Math.sqrt(dx * dx + dy * dy);
      var o = n / 5 * lane[j][2];
      d += (j ? "L" : "M") + (lane[j][0] - dy / len * o).toFixed(1) + " " + (lane[j][1] + dx / len * o).toFixed(1);
    }
    add(ferries, d, { "stroke-dasharray": "9 5", "stroke-dashoffset": String((Math.abs(n) * 5) % 14) });
  }
})();
```
